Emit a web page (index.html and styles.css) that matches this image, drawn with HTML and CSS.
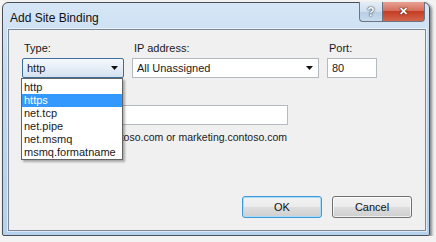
FILE: index.html
```html
<!DOCTYPE html>
<html lang="en">
<head>
    <meta charset="UTF-8">
    <meta name="viewport" content="width=device-width, initial-scale=1.0">
    <title>Add Site Binding</title>
    <link rel="stylesheet" href="styles.css">
</head>
<body>
    <div class="window">
        <div class="titlebar">
            <span class="title">Add Site Binding</span>
            <div class="caption-btns">
                <span class="cap-btn help">?</span>
                <span class="cap-btn close">✕</span>
            </div>
        </div>

        <div class="client">
            <div class="fields">
                <label>Type:</label>
                <label>IP address:</label>
                <label>Port:</label>

                <div class="combo open">
                    <span>http</span>
                    <svg class="arrow" width="7" height="4" viewBox="0 0 7 4"><path d="M0 0h7L3.5 4z"/></svg>
                </div>
                <div class="combo">
                    <span>All Unassigned</span>
                    <svg class="arrow" width="7" height="4" viewBox="0 0 7 4"><path d="M0 0h7L3.5 4z"/></svg>
                </div>
                <div class="textbox">80</div>
            </div>

            <label class="host-label">Host name:</label>
            <div class="textbox host"></div>
            <p class="example">Example: www.contoso.com or marketing.contoso.com</p>

            <div class="buttons">
                <button class="btn default">OK</button>
                <button class="btn">Cancel</button>
            </div>

            <!-- open list of the Type combo, lies over the form -->
            <ul class="dropdown">
                <li>http</li>
                <li class="selected">https</li>
                <li>net.tcp</li>
                <li>net.pipe</li>
                <li>net.msmq</li>
                <li>msmq.formatname</li>
            </ul>
        </div>
    </div>
</body>
</html>
```

FILE: styles.css
```css
body {
    margin: 0;
    padding: 2px 0 0 2px;
    background-color: #f3f3f3;
    font-family: "Liberation Sans", Arial, sans-serif;
    font-size: 11px;
    color: #1a1a1a;
}

.window {
    width: 426px;
    height: 232px;
    border: 1px solid #4a4f55;
    border-radius: 6px 6px 2px 2px;
    background: linear-gradient(180deg, #d6e6f6 0%, #c2d9f0 30%, #b5d1ed 100%);
    box-shadow: 2px 2px 3px rgba(0, 0, 0, 0.45);
    display: flex;
    flex-direction: column;
}

.titlebar {
    height: 26px;
    display: flex;
    justify-content: space-between;
    align-items: flex-start;
}

.title {
    margin: 8px 0 0 7px;
    font-size: 12px;
    color: #111;
}

.caption-btns {
    display: flex;
    margin-right: 4px;
    margin-top: -1px;
}

.cap-btn {
    height: 19px;
    display: flex;
    align-items: center;
    justify-content: center;
    border: 1px solid #6b7480;
    border-top: none;
    font-weight: bold;
    color: #fff;
}

.help {
    width: 22px;
    border-right: none;
    border-radius: 0 0 0 4px;
    background: linear-gradient(180deg, #e3edf7 0%, #cfdeee 50%, #b7cde4 51%, #c9dcee 100%);
    font-size: 12px;
    text-shadow: 0 0 2px #333, 0 0 1px #333;
}

.close {
    width: 41px;
    border-radius: 0 0 4px 0;
    background: linear-gradient(180deg, #e8a193 0%, #d6705d 45%, #c53d25 50%, #d2654b 100%);
    font-size: 11px;
    text-shadow: 0 0 2px #4a1a10, 0 0 1px #4a1a10;
}

.client {
    position: relative;
    margin: 0 3px 0 5px;
    border: 1px solid #7d8896;
    box-shadow: 0 0 0 1px rgba(255, 255, 255, 0.55);
    background-color: #f0f0f0;
    padding: 12px 13px 12px 13px;
    box-sizing: border-box;
    height: 202px;
    display: flex;
    flex-direction: column;
}

.fields {
    display: grid;
    grid-template-columns: 102px 187px 50px;
    column-gap: 8px;
    row-gap: 3px;
}

label {
    display: block;
    line-height: 13px;
    padding-left: 2px;
}

.combo,
.textbox {
    height: 20px;
    box-sizing: border-box;
    border: 1px solid #b5b9c0;
    background-color: #fff;
    display: flex;
    align-items: center;
    padding-left: 4px;
}

.combo {
    justify-content: space-between;
    padding-right: 5px;
}

.combo.open {
    border-color: #3d6f9b;
    background: linear-gradient(180deg, #f4f8fc 0%, #e6eef6 50%, #d3e2f0 100%);
    border-radius: 2px;
}

.arrow {
    fill: #111;
}

.host-label {
    margin-top: 12px;
}

.textbox.host {
    width: 266px;
    margin-top: 2px;
}

.example {
    margin: 6px 0 0 0;
    line-height: 13px;
    font-size: 10.5px;
    padding-left: 10px;
}

.buttons {
    margin-top: auto;
    display: flex;
    justify-content: flex-end;
    gap: 10px;
}

.btn {
    width: 80px;
    height: 22px;
    font-family: inherit;
    font-size: 11px;
    color: #111;
    border: 1px solid #707070;
    border-radius: 3px;
    background: linear-gradient(180deg, #f2f2f2 0%, #ebebeb 50%, #dddddd 51%, #cfcfcf 100%);
    box-shadow: inset 0 0 0 1px rgba(255, 255, 255, 0.7);
}

.btn.default {
    border-color: #3c9ad8;
    box-shadow: inset 0 0 0 1px #a9dcf6;
}

.dropdown {
    position: absolute;
    left: 12px;
    top: 48px;
    width: 102px;
    margin: 0;
    padding: 2px 0 0 0;
    list-style: none;
    background-color: #fff;
    border: 1px solid #646464;
    box-sizing: border-box;
    box-shadow: 2px 2px 2px rgba(0, 0, 0, 0.3);
}

.dropdown li {
    height: 13px;
    line-height: 13px;
    padding-left: 2px;
}

.dropdown li.selected {
    background-color: #3399ff;
    color: #fff;
}
```
